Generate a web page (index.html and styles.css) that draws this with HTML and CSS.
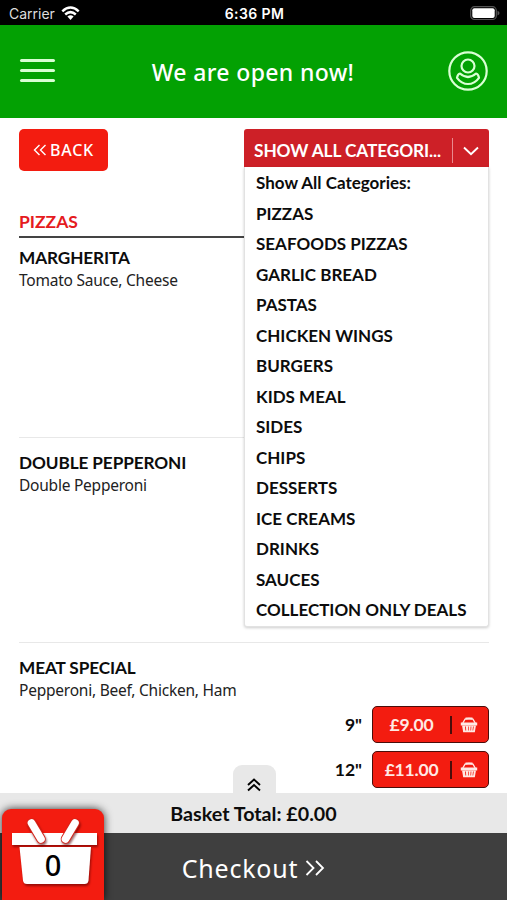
FILE: index.html
```html
<!DOCTYPE html>
<html lang="en">
<head>
  <meta charset="UTF-8">
  <meta name="viewport" content="width=device-width,initial-scale=1">
  <title>Menu</title>
  <link rel="stylesheet" href="styles.css">
</head>
<body>

  <svg class="defs" width="0" height="0">
    <symbol id="basket" viewBox="0 0 18 16">
      <path d="M2.800 6 5 2.200Q9 .5 13 2.200L15.200 6" fill="none" stroke="currentColor" stroke-width="1.400"/>
      <path d="M5.500 1.600h7" stroke="currentColor" stroke-width="2.200"/>
      <path fill-rule="evenodd" fill="currentColor" d="M.8 5.500h16.400v2.900H.8zM2 8.300h14l-1.200 6.900H3.200zM5 9.500l.4 4h.8l-.3-4zM8 9.500v4h.7v-4zM10.600 9.500l-.2 4h.7l.3-4zM13 9.500l-.5 4h.7l.6-4z"/>
    </symbol>
  </svg>

  <div class="status-bar">
    <div class="carrier">
      <span>Carrier</span>
      <svg width="19" height="15" viewBox="0 0 19 15" fill="none" stroke="#fff" stroke-width="2.500">
        <path d="M1.300 5.300Q9.500-2.200 17.700 5.300"/>
        <path d="M4.200 8.500Q9.500 3.800 14.800 8.500"/>
        <path d="M6.400 10.600Q9.500 8.100 12.600 10.600L9.500 14z" fill="#fff" stroke="none"/>
      </svg>
    </div>
    <div class="clock">6:36 PM</div>
    <svg class="battery" width="30" height="15" viewBox="0 0 30 15">
      <rect x=".7" y=".7" width="25.600" height="12.800" rx="3.800" fill="none" stroke="#555" stroke-width="1.200"/>
      <rect x="2.300" y="2.300" width="22.400" height="9.600" rx="2" fill="#fff"/>
      <path d="M27.500 4.800q2 .7 2 2.300t-2 2.300z" fill="#555"/>
    </svg>
  </div>

  <header class="header">
    <div class="burger"><span></span><span></span><span></span></div>
    <div class="header-title">We are open now!</div>
    <svg class="user" width="40" height="40" viewBox="0 0 40 40" fill="none" stroke="#d9ffd4" stroke-width="2.200">
      <circle cx="20" cy="20" r="18.700"/>
      <circle cx="20" cy="15" r="6.500"/>
      <path d="M12 22.500Q20 29.500 28 22.500Q30.200 22.800 31 26.800Q26.500 33 20 33T9 26.800Q9.800 22.800 12 22.500z" stroke-linejoin="round"/>
    </svg>
  </header>

  <main class="content">
    <div class="toolbar">
      <a class="back">
        <svg width="14" height="12" viewBox="0 0 14 12" fill="none" stroke="#fff" stroke-width="1.400"><path d="M6.500 1 1.500 6l5 5M12.500 1 7.500 6l5 5"/></svg>
        <span>BACK</span>
      </a>
      <div class="dropdown">
        <div class="dropdown-head">
          <span class="dropdown-label">SHOW ALL CATEGORI...</span>
          <span class="dropdown-arrow">
            <svg width="16" height="10" viewBox="0 0 16 10" fill="none" stroke="#fff" stroke-width="1.900"><path d="m1 1.500 7 6.800 7-6.800"/></svg>
          </span>
        </div>
        <ul class="dropdown-list">
          <li>Show All Categories:</li>
          <li>PIZZAS</li>
          <li>SEAFOODS PIZZAS</li>
          <li>GARLIC BREAD</li>
          <li>PASTAS</li>
          <li>CHICKEN WINGS</li>
          <li>BURGERS</li>
          <li>KIDS MEAL</li>
          <li>SIDES</li>
          <li>CHIPS</li>
          <li>DESSERTS</li>
          <li>ICE CREAMS</li>
          <li>DRINKS</li>
          <li>SAUCES</li>
          <li>COLLECTION ONLY DEALS</li>
        </ul>
      </div>
    </div>

    <h2 class="category">PIZZAS</h2>

    <div class="item">
      <h3>MARGHERITA</h3>
      <p>Tomato Sauce, Cheese</p>
    </div>
    <div class="item">
      <h3>DOUBLE PEPPERONI</h3>
      <p>Double Pepperoni</p>
    </div>
    <div class="item">
      <h3>MEAT SPECIAL</h3>
      <p>Pepperoni, Beef, Chicken, Ham</p>
      <div class="prices">
        <div class="price-row">
          <span class="size">9"</span>
          <a class="price"><span class="amount">£9.00</span><svg width="18" height="16"><use href="#basket"/></svg></a>
        </div>
        <div class="price-row">
          <span class="size">12"</span>
          <a class="price"><span class="amount">£11.00</span><svg width="18" height="16"><use href="#basket"/></svg></a>
        </div>
      </div>
    </div>
  </main>

  <footer class="footer">
    <div class="pull-tab">
      <svg width="14" height="14" viewBox="0 0 14 14" fill="none" stroke="#000" stroke-width="1.900"><path d="m1 7 6-5.500L13 7M1 12.500 7 7l6 5.500"/></svg>
    </div>
    <div class="total">Basket Total: £0.00</div>
    <div class="checkout">
      <span>Checkout</span>
      <svg width="20" height="16" viewBox="0 0 20 16" fill="none" stroke="#fff" stroke-width="1.800"><path d="m1.500 1 7 7-7 7M11 1l7 7-7 7"/></svg>
    </div>
    <div class="basket-badge">
      <svg width="102" height="91" viewBox="0 0 102 91">
        <g class="basket-shape" fill="#fff">
          <path d="M10 24h85v12H10z"/>
          <path d="M17.500 38h71.500l-2.500 33.500q-.5 3.500-4 3.500H25q-3.500 0-4-3.500z"/>
        </g>
        <g class="basket-shape" fill="none" stroke-linecap="round">
          <path d="m29.500 14 9.500 16M73 14l-9.500 16" stroke="#d8241a" stroke-width="9.500"/>
          <path d="m29.500 14 9.500 16M73 14l-9.500 16" stroke="#fff" stroke-width="7.600"/>
        </g>
        <text class="basket-count" x="51" y="67" text-anchor="middle">0</text>
      </svg>
    </div>
  </footer>

</body>
</html>
```
FILE: styles.css
```css
* {
  box-sizing: border-box;
}
body {
  margin: 0;
  height: 900px;
  overflow: hidden;
  display: flex;
  flex-direction: column;
  background: #fff;
  color: #0c0c0c;
  font-family: Lato, sans-serif;
}
h2, h3, p, ul {
  margin: 0;
  padding: 0;
}
svg {
  display: block;
  flex: none;
}
.defs {
  position: absolute;
}
.status-bar {
  height: 25px;
  flex: none;
  display: grid;
  grid-template-columns: 1fr auto 1fr;
  align-items: center;
  padding: 2px 7px 0 9px;
  background: #000;
  color: #fff;
  font-family: Inter, sans-serif;
  font-size: 14px;
}
.carrier {
  display: flex;
  align-items: center;
  gap: 6px;
  color: #ddd;
}
.clock {
  font-weight: 600;
  letter-spacing: .4px;
}
.battery {
  justify-self: end;
}
.header {
  height: 93px;
  flex: none;
  display: flex;
  align-items: center;
  justify-content: space-between;
  padding: 0 19px 2px 20px;
  background: #03a103;
}
.burger {
  width: 35px;
  display: grid;
  gap: 7px;
}
.burger span {
  height: 3px;
  border-radius: 2px;
  background: #d9ffd4;
}
.header-title {
  color: #fff;
  font: 500 23px "Noto Sans", sans-serif;
  letter-spacing: .35px;
  padding: 2px 0 0 3px;
}
.content {
  flex: 1;
  min-height: 0;
  overflow: hidden;
  padding: 11px 18px 0 19px;
}
.toolbar {
  height: 80px;
  display: flex;
  justify-content: space-between;
  align-items: flex-start;
}
.back {
  width: 89px;
  height: 42px;
  display: flex;
  align-items: center;
  justify-content: center;
  gap: 3px;
  border-radius: 5px;
  background: #f31c10;
  color: #fff;
  font: 500 16px "Noto Sans", sans-serif;
  letter-spacing: .8px;
}
.dropdown {
  width: 245px;
  position: relative;
  z-index: 1;
  font-weight: 700;
}
.dropdown-head {
  height: 38px;
  display: flex;
  align-items: center;
  justify-content: space-between;
  padding: 5px 0 0 10px;
  border-radius: 3px 3px 0 0;
  background: #cd2027;
  color: #fff;
  font-size: 17.300px;
  letter-spacing: -.1px;
}
.dropdown-arrow {
  height: 25px;
  width: 37px;
  display: flex;
  align-items: center;
  justify-content: center;
  border-left: 1px solid #e98a8e;
}
.dropdown-list {
  height: 460px;
  list-style: none;
  background: #fff;
  border: 1px solid #e2e2e2;
  border-top: 0;
  border-radius: 0 0 3px 3px;
  box-shadow: 0 1px 3px rgba(0, 0, 0, .2);
  padding-left: 11px;
  font-size: 17px;
}
.dropdown-list li {
  height: 30.530px;
  line-height: 32px;
}
.category {
  height: 29px;
  border-bottom: 2px solid #444;
  color: #e51b20;
  font-size: 17.500px;
  line-height: 26px;
}
.item {
  height: 205px;
  padding-top: 13px;
  border-bottom: 1px solid #e8e8e8;
}
.category + .item {
  height: 200px;
  padding-top: 8px;
}
.item h3 {
  font-size: 17.200px;
  letter-spacing: -.1px;
  line-height: 24px;
}
.item p {
  font: 15.500px/21px "Noto Sans", sans-serif;
  letter-spacing: -.23px;
  color: #222;
}
.prices {
  display: grid;
  gap: 8px;
  padding-top: 5px;
}
.price-row {
  display: flex;
  align-items: center;
  justify-content: flex-end;
  gap: 10px;
  font-size: 17.500px;
  font-weight: 700;
}
.price {
  width: 117px;
  height: 37px;
  display: flex;
  align-items: center;
  padding-right: 10px;
  border: 1.500px solid #4a0d0a;
  border-radius: 5px;
  background: #f31c10;
  color: #ffe9e4;
}
.amount {
  flex: 1;
  height: 18px;
  line-height: 18px;
  text-align: center;
  border-right: 2px solid #4a0d0a;
  margin-right: 8px;
  letter-spacing: -.2px;
}
.footer {
  position: relative;
  flex: none;
}
.pull-tab {
  position: absolute;
  left: 233px;
  top: -28px;
  width: 43px;
  height: 29px;
  display: flex;
  align-items: center;
  justify-content: center;
  padding: 11px 2px 0 0;
  border-radius: 9px 9px 0 0;
  background: #e8e8e8;
}
.total {
  height: 40px;
  line-height: 41px;
  background: #e8e8e8;
  text-align: center;
  font-size: 19.700px;
  font-weight: 700;
}
.checkout {
  height: 67px;
  display: flex;
  align-items: center;
  justify-content: center;
  gap: 7px;
  background: #3f3f3f;
  color: #fff;
  font: 25px "Noto Sans", sans-serif;
  letter-spacing: .8px;
  padding-top: 2px;
}
.basket-badge {
  position: absolute;
  left: 2px;
  top: 16px;
  width: 102px;
  height: 91px;
  border-radius: 9px 9px 0 0;
  background: #f31c10;
  box-shadow: 0 0 9px rgba(0, 0, 0, .8);
}
.basket-shape {
  filter: drop-shadow(1px 2px 1px rgba(90, 0, 0, .6));
}
.basket-count {
  font: 500 29px "Noto Sans", sans-serif;
  fill: #000;
}
```
